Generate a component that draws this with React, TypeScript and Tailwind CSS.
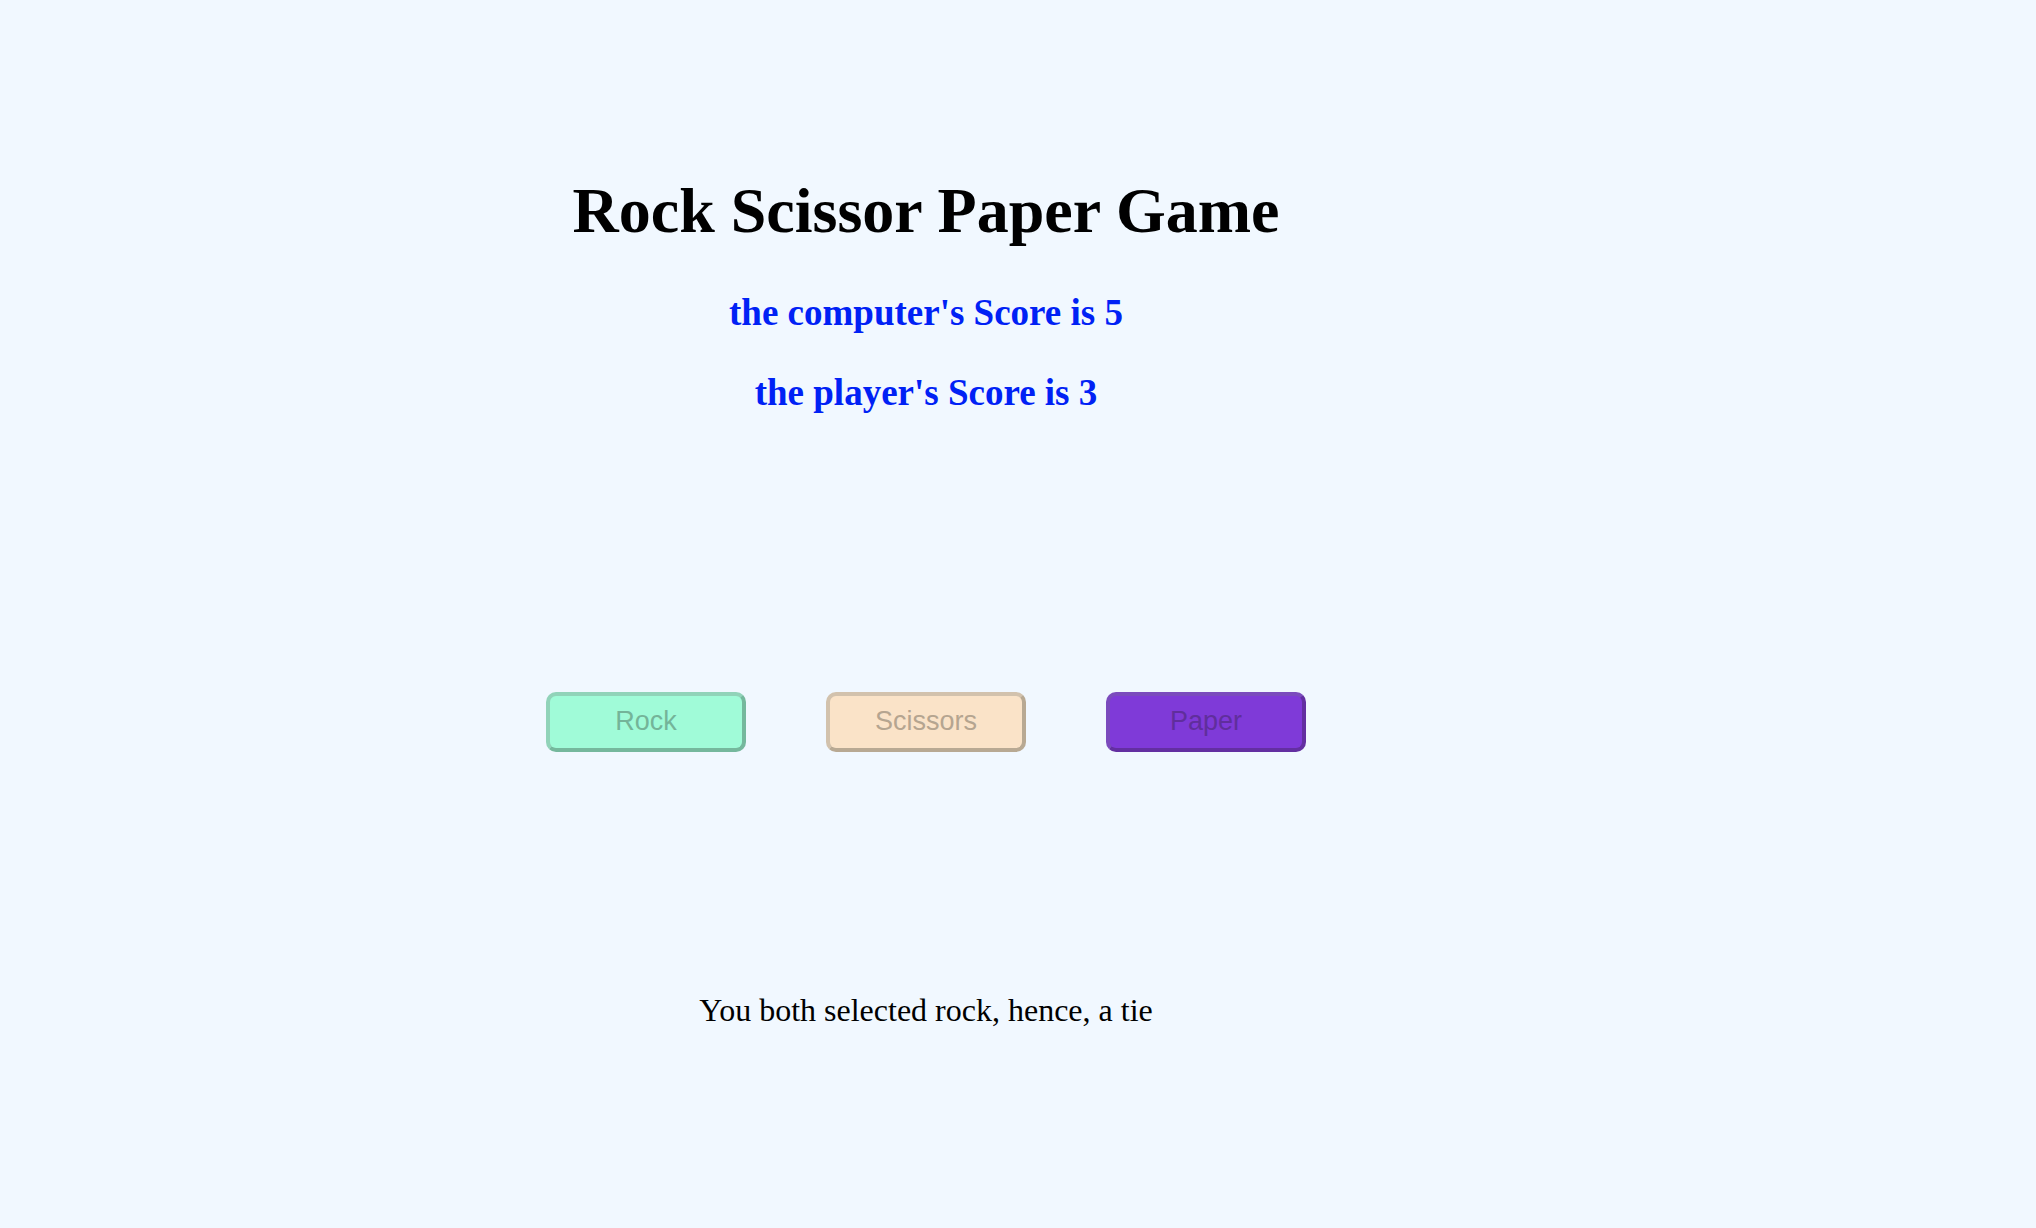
const choices = [
  {
    name: "Rock",
    style:
      "bg-[#a0fbd8] text-[#74b499] border-t-[#91d3b9] border-l-[#91d3b9] border-r-[#75b89d] border-b-[#75b89d]",
  },
  {
    name: "Scissors",
    style:
      "bg-[#fae3c8] text-[#b5a590] border-t-[#d2c2ad] border-l-[#d2c2ad] border-r-[#b8a993] border-b-[#b8a993]",
  },
  {
    name: "Paper",
    style:
      "bg-[#7f3ad8] text-[#602e9c] border-t-[#7b4bbd] border-l-[#7b4bbd] border-r-[#632fa1] border-b-[#632fa1]",
  },
];

export default function App() {
  return (
    <main className="flex min-h-screen flex-col items-center bg-[#f1f8ff] pt-[175px] pr-[184px] pb-16 text-center font-['Liberation_Serif',serif] text-black">
      <h1 className="text-[64px] leading-[72px] font-bold">Rock Scissor Paper Game</h1>
      <div className="mt-[45px] flex flex-col gap-[38px] text-[37px] leading-[42px] font-bold text-[#0021f5]">
        <h2>the computer's Score is 5</h2>
        <h2>the player's Score is 3</h2>
      </div>
      <div className="mt-[278px] flex gap-20">
        {choices.map((choice) => (
          <button
            key={choice.name}
            type="button"
            disabled
            className={`flex h-[60px] w-[200px] items-center justify-center rounded-[10px] border-4 pb-0.5 font-['Liberation_Sans',sans-serif] text-[27px] leading-[30px] ${choice.style}`}
          >
            {choice.name}
          </button>
        ))}
      </div>
      <p className="mt-60 text-[32px] leading-9">You both selected rock, hence, a tie</p>
    </main>
  );
}
